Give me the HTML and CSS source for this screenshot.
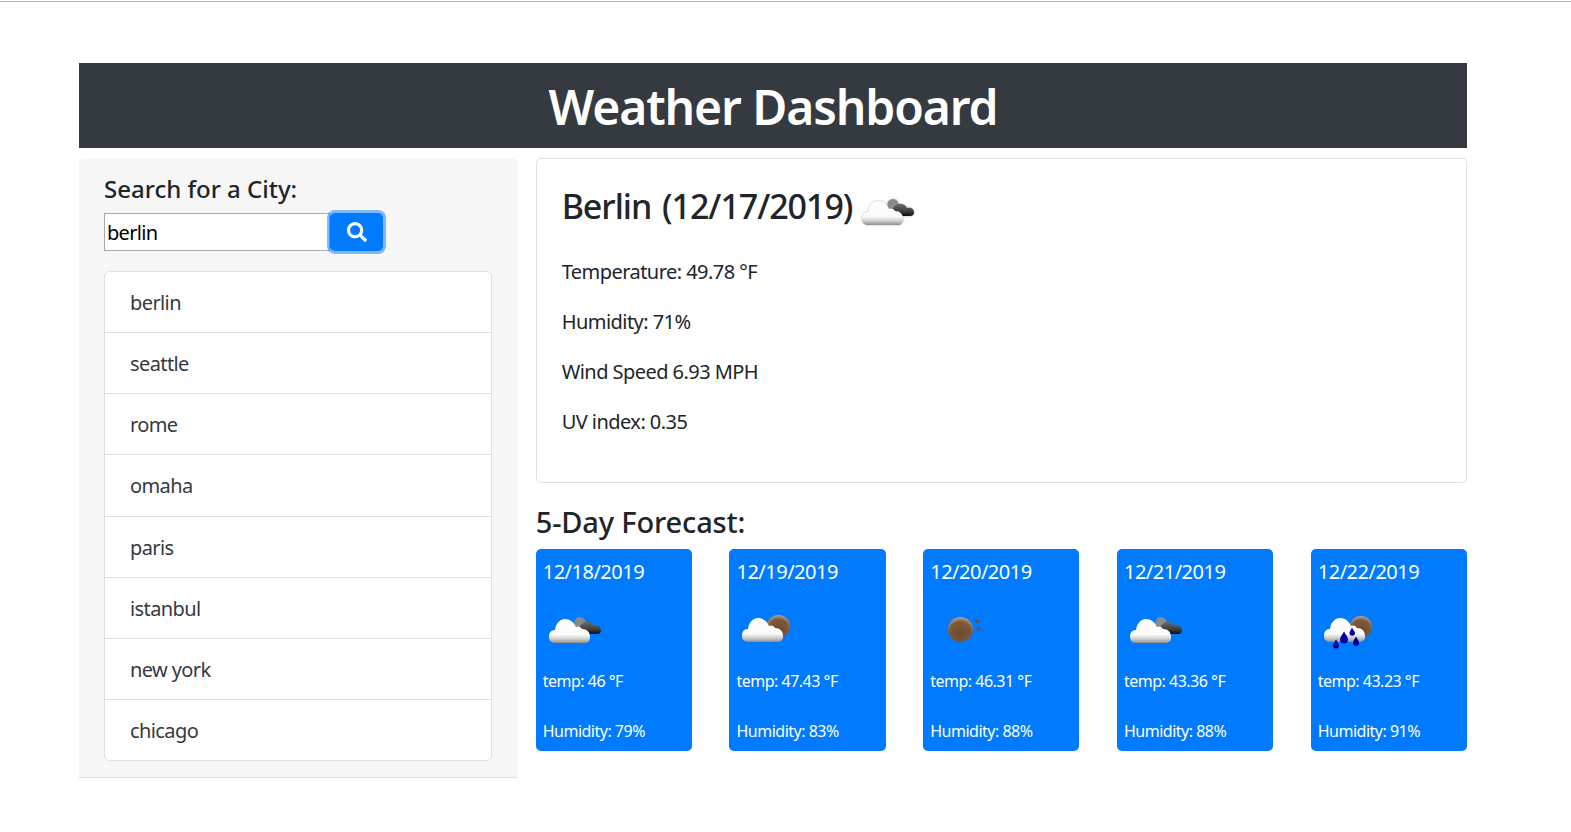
FILE: index.html
```html
<!DOCTYPE html>
<html lang="en">
<head>
    <meta charset="UTF-8">
    <meta name="viewport" content="width=device-width, initial-scale=1.0">
    <title>Weather Dashboard</title>
    <link rel="stylesheet" href="styles.css">
</head>
<body>
    <svg class="icon-defs" aria-hidden="true">
        <defs>
            <linearGradient id="white-cloud" x1="0" y1="0" x2="0" y2="1">
                <stop offset="0" stop-color="#ffffff"/>
                <stop offset="0.65" stop-color="#fbfbfb"/>
                <stop offset="0.85" stop-color="#c9c9c9"/>
                <stop offset="1" stop-color="#8d8d8d"/>
            </linearGradient>
            <linearGradient id="dark-cloud" x1="0" y1="0" x2="0" y2="1">
                <stop offset="0" stop-color="#6a6a6a"/>
                <stop offset="0.6" stop-color="#404040"/>
                <stop offset="1" stop-color="#0c0c0c"/>
            </linearGradient>
            <radialGradient id="brown-sun" cx="0.5" cy="0.65" r="0.65">
                <stop offset="0" stop-color="#70492c"/>
                <stop offset="0.7" stop-color="#7d593c"/>
                <stop offset="1" stop-color="#b7a48f"/>
            </radialGradient>
            <symbol id="cloud" viewBox="0 0 54 28">
                <path fill="url(#white-cloud)" d="M6 26 C1 26 0 22 0 19.500 C0 15 3 13 6 13 C7 6 11 2 16 2 C21 2 25 5 27 10 C29 8.500 32 10 33 12 C38 12 41 15 41 20 C41 24 39 26 35 26 Z"/>
            </symbol>
            <symbol id="dark-sky" viewBox="0 0 54 28">
                <circle cx="31" cy="5.500" r="5.500" fill="#8a8a8a"/>
                <path fill="url(#dark-cloud)" d="M33 17 C29 17 28 14 30 12 C31 8 35 4 39 5 C42 5 44 7 45 9 C49 8 52 10 52 13.500 C52 16 50 17 48 17 Z"/>
            </symbol>
        </defs>
    </svg>

    <div class="top-line"></div>

    <div class="container">
        <header class="page-title">
            <h1>Weather Dashboard</h1>
        </header>

        <div class="layout">
            <aside class="search-panel">
                <h2 class="search-label">Search for a City:</h2>
                <div class="search-row">
                    <input type="text" class="search-input" value="berlin">
                    <button class="search-btn" aria-label="Search">
                        <svg viewBox="0 0 512 512" width="20" height="20">
                            <path fill="#fff" d="M505 442.700L405.300 343c-4.500-4.500-10.600-7-17-7H372c27.600-35.300 44-79.700 44-128C416 93.100 322.900 0 208 0S0 93.100 0 208s93.100 208 208 208c48.300 0 92.700-16.400 128-44v16.300c0 6.400 2.500 12.500 7 17l99.700 99.700c9.400 9.400 24.600 9.400 33.900 0l28.300-28.300c9.400-9.400 9.400-24.600.1-34zM208 336c-70.700 0-128-57.200-128-128 0-70.700 57.200-128 128-128 70.700 0 128 57.200 128 128 0 70.700-57.200 128-128 128z"/>
                        </svg>
                    </button>
                </div>
                <ul class="city-list">
                    <li>berlin</li>
                    <li>seattle</li>
                    <li>rome</li>
                    <li>omaha</li>
                    <li>paris</li>
                    <li>istanbul</li>
                    <li>new york</li>
                    <li>chicago</li>
                </ul>
            </aside>

            <main class="weather-column">
                <section class="current-card">
                    <h2 class="current-title">Berlin (12/17/2019)
                        <svg class="current-icon" viewBox="0 0 54 28" width="54" height="28">
                            <use href="#dark-sky"/>
                            <use href="#cloud"/>
                        </svg>
                    </h2>
                    <p>Temperature: 49.78 °F</p>
                    <p>Humidity: 71%</p>
                    <p>Wind Speed 6.93 MPH</p>
                    <p>UV index: 0.35</p>
                </section>

                <h3 class="forecast-title">5-Day Forecast:</h3>
                <div class="forecast-row">
                    <article class="day-card">
                        <h4>12/18/2019</h4>
                        <svg class="day-icon" viewBox="0 0 54 28" width="54" height="28">
                            <use href="#dark-sky"/>
                            <use href="#cloud"/>
                        </svg>
                        <p>temp: 46 °F</p>
                        <p>Humidity: 79%</p>
                    </article>
                    <article class="day-card">
                        <h4>12/19/2019</h4>
                        <svg class="day-icon" viewBox="0 0 54 28" width="54" height="28">
                            <circle cx="36.500" cy="9.500" r="11.500" fill="url(#brown-sun)"/>
                            <use href="#cloud" y="-1"/>
                        </svg>
                        <p>temp: 47.43 °F</p>
                        <p>Humidity: 83%</p>
                    </article>
                    <article class="day-card">
                        <h4>12/20/2019</h4>
                        <svg class="day-icon" viewBox="0 0 54 28" width="54" height="28">
                            <circle cx="24.500" cy="12.500" r="12.500" fill="url(#brown-sun)"/>
                            <circle cx="41" cy="4" r="2" fill="#6d5138"/>
                            <circle cx="43" cy="12" r="1.800" fill="#6d5138"/>
                        </svg>
                        <p>temp: 46.31 °F</p>
                        <p>Humidity: 88%</p>
                    </article>
                    <article class="day-card">
                        <h4>12/21/2019</h4>
                        <svg class="day-icon" viewBox="0 0 54 28" width="54" height="28">
                            <use href="#dark-sky"/>
                            <use href="#cloud"/>
                        </svg>
                        <p>temp: 43.36 °F</p>
                        <p>Humidity: 88%</p>
                    </article>
                    <article class="day-card">
                        <h4>12/22/2019</h4>
                        <svg class="day-icon" viewBox="0 0 54 28" width="54" height="28">
                            <circle cx="37" cy="10" r="11" fill="url(#brown-sun)"/>
                            <use href="#cloud" y="-1"/>
                            <path fill="#00009a" d="M12 22.500 C14 26 15 27 15 28.500 A3 3 0 0 1 9 28.500 C9 27 10 26 12 22.500 Z"/>
                            <path fill="#00009a" d="M20 14.500 C22 18 24 20 24 22.500 A4 4 0 0 1 16 22.500 C16 20 18 18 20 14.500 Z"/>
                            <path fill="#00009a" d="M28 10.500 C29 13 31 14 31 16 A2.700 2.700 0 0 1 25.500 16 C25.500 14 27 13 28 10.500 Z"/>
                            <path fill="#00009a" d="M32 19.500 C34 23 35 24 35 26 A3 3 0 0 1 29 26 C29 24 30 23 32 19.500 Z"/>
                        </svg>
                        <p>temp: 43.23 °F</p>
                        <p>Humidity: 91%</p>
                    </article>
                </div>
            </main>
        </div>
    </div>
</body>
</html>
```

FILE: styles.css
```css
body {
    margin: 0;
    padding-top: 1px;
    background-color: #fff;
    color: #212529;
    font-family: "Noto Sans", "Open Sans", Arial, sans-serif;
}

.icon-defs {
    display: block;
    width: 0;
    height: 0;
}

.top-line {
    height: 1px;
    background-color: #b4b4b4;
}

.container {
    width: 1388px;
    margin: 61px 0 0 79px;
}

.page-title {
    box-sizing: border-box;
    height: 85px;
    padding-top: 2px;
    display: flex;
    align-items: center;
    justify-content: center;
    background-color: #343a40;
    color: #fff;
}

.page-title h1 {
    margin: 0;
    font-size: 48px;
    font-weight: 600;
    line-height: 1.2;
    letter-spacing: -1.1px;
}

.layout {
    display: grid;
    grid-template-columns: 437.7px 931.3px;
    gap: 19px;
    margin-top: 10px;
    align-items: start;
}

.search-panel {
    padding: 16px 25px 16px;
    background-color: #f7f7f7;
    border-bottom: 1px solid #dfdfdf;
    border-radius: 5px 5px 0 0;
}

.search-label {
    margin: 0 0 10px;
    font-size: 24px;
    font-weight: 500;
    line-height: 29px;
}

.search-row {
    display: flex;
    align-items: center;
}

.search-input {
    box-sizing: border-box;
    width: 226px;
    height: 38px;
    padding: 0 2px;
    border: 1px solid #a9a9a9;
    border-radius: 0;
    background-color: #fff;
    color: #000;
    font-family: inherit;
    font-size: 20px;
    letter-spacing: -0.7px;
}

.search-btn {
    box-sizing: border-box;
    width: 53px;
    height: 38px;
    display: flex;
    align-items: center;
    justify-content: center;
    padding: 0;
    border: none;
    border-radius: 5px;
    background-color: #007bff;
    box-shadow: 0 0 0 3px rgba(0, 123, 255, 0.5);
}

.city-list {
    margin: 20px 0 0;
    padding: 0;
    list-style: none;
    background-color: #fff;
    border: 1px solid #dfdfdf;
    border-radius: 5px;
}

.city-list li {
    height: 60.14px;
    padding-left: 25px;
    line-height: 62px;
    font-size: 20px;
    letter-spacing: -0.6px;
    border-bottom: 1px solid #dfdfdf;
    color: #343a40;
}

.city-list li:last-child {
    border-bottom: none;
}

.current-card {
    box-sizing: border-box;
    height: 325px;
    padding: 25px 25px 0;
    border: 1px solid #dfdfdf;
    border-radius: 5px;
}

.current-title {
    margin: 0 0 29px;
    display: flex;
    align-items: flex-start;
    gap: 10px;
    font-size: 34px;
    font-weight: 500;
    line-height: 44px;
    letter-spacing: -1.05px;
    word-spacing: 3px;
}

.current-icon {
    margin-top: 15px;
    filter: drop-shadow(0 0 1px rgba(0, 0, 0, 0.3));
}

.current-card p {
    margin: 0 0 20px;
    font-size: 20px;
    line-height: 30px;
    letter-spacing: -0.55px;
}

.forecast-title {
    margin: 22px 0 10px;
    font-size: 29px;
    font-weight: 500;
    line-height: 34px;
    letter-spacing: -0.15px;
}

.forecast-row {
    display: flex;
    justify-content: space-between;
}

.day-card {
    box-sizing: border-box;
    width: 156.2px;
    height: 202px;
    padding: 9px 7px 0;
    background-color: #007bff;
    border-radius: 5px;
    color: #fff;
}

.day-card h4 {
    margin: 0;
    font-size: 20px;
    font-weight: 400;
    line-height: 28px;
    letter-spacing: -0.5px;
}

.day-icon {
    display: block;
    overflow: visible;
    margin: 31px 0 24px 6px;
}

.day-card p {
    margin: 0 0 25px;
    font-size: 16px;
    line-height: 25px;
    letter-spacing: -0.5px;
}
```
